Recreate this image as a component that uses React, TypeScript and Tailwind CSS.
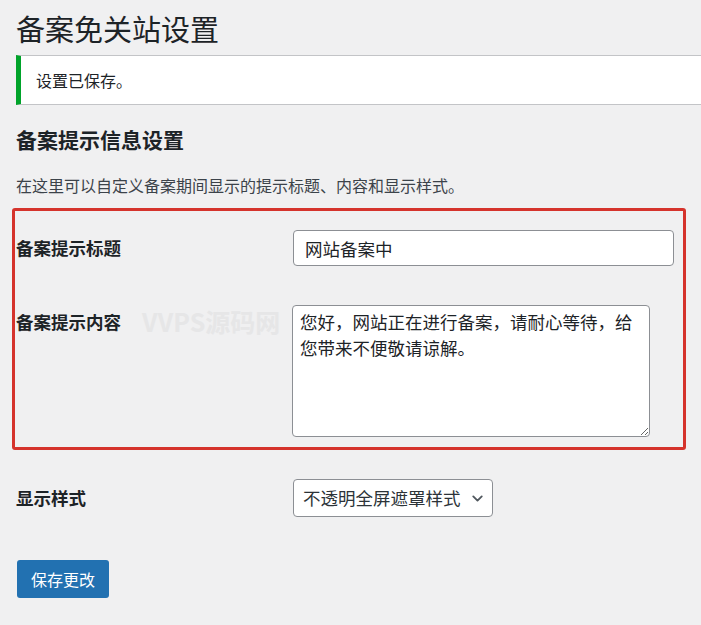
import { ChevronDown } from 'lucide-react';

const font = { fontFamily: '"Noto Sans CJK SC", "Noto Sans", sans-serif' };

export default function App() {
  return (
    <div
      className="min-h-screen bg-[#f0f0f1] pl-[16px] text-[#1d2327] overflow-hidden"
      style={font}
    >
      <h1 className="pt-[9px] text-[29px] leading-[38px] font-normal">备案免关站设置</h1>

      {/* notice */}
      <div className="mt-[8px] h-[50px] flex items-center bg-white border-y border-[#c3c4c7] border-l-[5px] border-l-[#00a32a] pl-[15px]">
        <p className="text-[16px]">设置已保存。</p>
      </div>

      <h2 className="mt-[20px] text-[21px] leading-[28px] font-bold">备案提示信息设置</h2>
      <p className="mt-[20px] text-[16px] leading-[24px] text-[#3c434a]">
        在这里可以自定义备案期间显示的提示标题、内容和显示样式。
      </p>

      {/* highlighted fields */}
      <div className="mt-[11px] -ml-[4px] w-[674px] border-[3px] border-[#d5332c] rounded-[3px] pl-[1px] pt-[19px] pb-[10px]">
        <div className="flex items-center">
          <label className="w-[277px] text-[17.5px] font-bold">备案提示标题</label>
          <input
            defaultValue="网站备案中"
            className="w-[381px] h-[36px] bg-white border border-[#8c8f94] rounded-[4px] px-[11px] text-[17.5px] outline-none"
            style={font}
          />
        </div>
        <div className="relative flex items-start mt-[39px]">
          <label className="w-[276px] mt-[4px] text-[17.5px] leading-[26px] font-bold">备案提示内容</label>
          <span className="absolute left-[126px] top-[1px] text-[25px] font-bold leading-[30px] text-[#e4e4e5] opacity-80 pointer-events-none select-none">
            VVPS源码网
          </span>
          <textarea
            defaultValue="您好，网站正在进行备案，请耐心等待，给您带来不便敬请谅解。"
            className="w-[358px] h-[132px] bg-white border border-[#8c8f94] rounded-[4px] px-[7px] py-[3px] text-[17.5px] leading-[26px] outline-none"
            style={font}
          />
        </div>
      </div>

      <div className="flex items-center mt-[29px]">
        <label className="w-[277px] text-[17.5px] font-bold">显示样式</label>
        <div className="w-[200px] h-[38px] bg-white border border-[#8c8f94] rounded-[4px] flex items-center justify-between pl-[9px] pr-[6px]">
          <span className="text-[17.5px] text-[#2c3338]">不透明全屏遮罩样式</span>
          <ChevronDown size={17} strokeWidth={2.6} className="text-[#50575e]" />
        </div>
      </div>

      <button className="mt-[43px] ml-px w-[92px] h-[38px] bg-[#2271b1] text-white text-[16px] rounded-[3px]">
        保存更改
      </button>
    </div>
  );
}
